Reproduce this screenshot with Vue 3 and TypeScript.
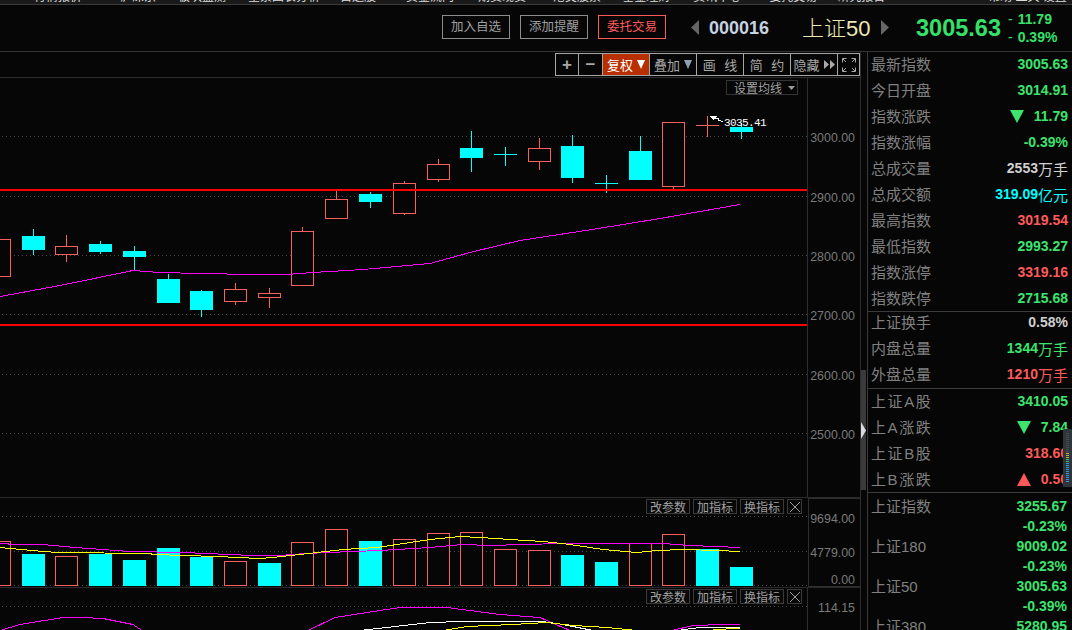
<script setup lang="ts">
interface Candle {
  x: number;
  hi: number;
  lo: number;
  top: number;
  bot: number;
  up: boolean;
  cross?: boolean;
  vol: number;
  volUp: boolean;
}

interface Row {
  label: string;
  value?: string;
  unit?: string;
  tone?: string;
  arrow?: 'up' | 'down';
}

// 상단 메뉴: 잘려서 아래쪽만 보임
const menu = [
  { t: '行情报价', gap: 34 },
  { t: '沪深京', gap: 38 },
  { t: '板块监测', gap: 22 },
  { t: '全景图表分析', gap: 22 },
  { t: '自选股', gap: 20 },
  { t: '资金流向', gap: 30 },
  { t: '期货现货', gap: 24 },
  { t: '港美股票', gap: 27 },
  { t: '基金理财', gap: 21 },
  { t: '资讯中心', gap: 23 },
  { t: '委托交易', gap: 28 },
  { t: '研究报告', gap: 20 },
  { t: '帮助 工具 设置', gap: 103 }
];

const tools = [
  { t: '+', cls: 'sym w23' },
  { t: '−', cls: 'sym w24' },
  { t: '复权', cls: 'on wide', tri: true },
  { t: '叠加', cls: 'wide', tri: true },
  { t: '画 线', cls: 'wide' },
  { t: '简 约', cls: 'wide' },
  { t: '隐藏', cls: 'wide', more: true }
];

const candles: Candle[] = [
  { x: -1, hi: 239, lo: 276, top: 239, bot: 276, up: true, vol: 541, volUp: true },
  { x: 33, hi: 229, lo: 255, top: 236, bot: 250, up: false, vol: 554, volUp: false },
  { x: 66, hi: 235, lo: 262, top: 246, bot: 254, up: true, vol: 556, volUp: true },
  { x: 100, hi: 241, lo: 254, top: 244, bot: 252, up: false, vol: 554, volUp: false },
  { x: 134, hi: 246, lo: 270, top: 251, bot: 257, up: false, vol: 560, volUp: false },
  { x: 168, hi: 274, lo: 303, top: 279, bot: 303, up: false, vol: 548, volUp: false },
  { x: 201, hi: 290, lo: 317, top: 291, bot: 310, up: false, vol: 557, volUp: false },
  { x: 235, hi: 283, lo: 305, top: 289, bot: 301, up: true, vol: 561, volUp: true },
  { x: 269, hi: 288, lo: 308, top: 293, bot: 297, up: true, vol: 563, volUp: false },
  { x: 302, hi: 227, lo: 285, top: 231, bot: 285, up: true, vol: 542, volUp: true },
  { x: 336, hi: 191, lo: 218, top: 199, bot: 218, up: true, vol: 529, volUp: true },
  { x: 370, hi: 192, lo: 208, top: 194, bot: 202, up: false, vol: 541, volUp: false },
  { x: 404, hi: 181, lo: 215, top: 183, bot: 213, up: true, vol: 539, volUp: true },
  { x: 438, hi: 159, lo: 182, top: 164, bot: 179, up: true, vol: 533, volUp: true },
  { x: 471, hi: 131, lo: 172, top: 148, bot: 158, up: false, vol: 532, volUp: true },
  { x: 505, hi: 147, lo: 166, top: 154, bot: 154, up: false, cross: true, vol: 549, volUp: true },
  { x: 539, hi: 138, lo: 170, top: 148, bot: 161, up: true, vol: 550, volUp: true },
  { x: 572, hi: 135, lo: 183, top: 146, bot: 178, up: false, vol: 555, volUp: false },
  { x: 606, hi: 175, lo: 193, top: 183, bot: 183, up: false, cross: true, vol: 562, volUp: false },
  { x: 640, hi: 136, lo: 180, top: 151, bot: 180, up: false, vol: 543, volUp: true },
  { x: 673, hi: 122, lo: 189, top: 122, bot: 186, up: true, vol: 534, volUp: true },
  { x: 707, hi: 116, lo: 137, top: 125, bot: 125, up: true, cross: true, vol: 549, volUp: false },
  { x: 741, hi: 123, lo: 139, top: 127, bot: 132, up: false, vol: 567, volUp: false }
];

const mainGrid = [136, 196, 255, 314, 374, 433];
const mainAxis = [
  { t: '3000.00', y: 137 },
  { t: '2900.00', y: 197 },
  { t: '2800.00', y: 256 },
  { t: '2700.00', y: 315 },
  { t: '2600.00', y: 375 },
  { t: '2500.00', y: 434 }
];

const toPts = (list: number[][]) => list.map((p) => p.join(',')).join(' ');

const maLine = toPts([
  [0, 296], [60, 285], [133, 270], [160, 272], [200, 273], [253, 274], [286, 274],
  [313, 272], [363, 269], [430, 263], [470, 252], [520, 240], [592, 229], [660, 218], [740, 204]
]);

const volYellow = toPts([
  [0, 547], [43, 551], [58, 552], [150, 553], [153, 554], [217, 556], [260, 558], [273, 557],
  [300, 554], [317, 552], [343, 549], [377, 547], [430, 539], [460, 536], [480, 537], [510, 539],
  [543, 541], [570, 544], [603, 549], [637, 552], [657, 550], [683, 549], [717, 550], [740, 551]
]);
const volPurple = toPts([
  [0, 543], [17, 544], [42, 544], [75, 547], [130, 551], [183, 552], [253, 555], [283, 555],
  [290, 554], [327, 552], [380, 550], [430, 547], [463, 544], [490, 545], [523, 544], [563, 543],
  [663, 543], [690, 545], [740, 547]
]);

const subLines = [
  { c: '#ff00ff', p: toPts([[0, 630], [20, 624], [63, 617], [83, 617], [103, 618], [133, 624], [142, 630]]) },
  { c: '#ff00ff', p: toPts([[308, 630], [335, 617], [367, 612], [400, 607], [447, 607], [500, 614], [540, 617], [570, 630]]) },
  { c: '#ff00ff', p: toPts([[672, 630], [693, 625], [723, 624], [740, 624]]) },
  { c: '#ffffff', p: toPts([[360, 630], [430, 622], [463, 621], [543, 621], [563, 624], [593, 630]]) },
  { c: '#ffffff', p: toPts([[677, 630], [700, 627], [740, 627]]) },
  { c: '#ffff00', p: toPts([[443, 630], [467, 626], [513, 624], [547, 622], [573, 625], [607, 627], [637, 630]]) },
  { c: '#ffff00', p: toPts([[713, 629], [740, 628]]) }
];

const paneTools = ['改参数', '加指标', '换指标'];

const groupA: Row[] = [
  { label: '最新指数', value: '3005.63', tone: 'down' },
  { label: '今日开盘', value: '3014.91', tone: 'down' },
  { label: '指数涨跌', value: '11.79', tone: 'down', arrow: 'down' },
  { label: '指数涨幅', value: '-0.39%', tone: 'down' },
  { label: '总成交量', value: '2553', unit: '万手', tone: 'plain' },
  { label: '总成交额', value: '319.09', unit: '亿元', tone: 'cyan' },
  { label: '最高指数', value: '3019.54', tone: 'rise' },
  { label: '最低指数', value: '2993.27', tone: 'down' },
  { label: '指数涨停', value: '3319.16', tone: 'rise' },
  { label: '指数跌停', value: '2715.68', tone: 'down' }
];
const groupB: Row[] = [
  { label: '上证换手', value: '0.58%', tone: 'plain' },
  { label: '内盘总量', value: '1344', unit: '万手', tone: 'down' },
  { label: '外盘总量', value: '1210', unit: '万手', tone: 'rise' }
];
const groupC: Row[] = [
  { label: '上证A股', value: '3410.05', tone: 'down' },
  { label: '上A涨跌', value: '7.84', tone: 'down', arrow: 'down' },
  { label: '上证B股', value: '318.60', tone: 'rise' },
  { label: '上B涨跌', value: '0.50', tone: 'rise', arrow: 'up' }
];
const groupD: Row[] = [
  { label: '上证指数', value: '3255.67', tone: 'down' },
  { label: '', value: '-0.23%', tone: 'down' },
  { label: '上证180', value: '9009.02', tone: 'down' },
  { label: '', value: '-0.23%', tone: 'down' },
  { label: '上证50', value: '3005.63', tone: 'down' },
  { label: '', value: '-0.39%', tone: 'down' },
  { label: '上证380', value: '5280.95', tone: 'down' }
];
const groups = [groupA, groupB, groupC];

// 라틴 글자가 들어간 라벨은 폭을 맞추기 위해 자간을 준다
const isLatin = (s: string) => /[AB]/.test(s);

// 오른쪽 작은 레벨 미터
const meter = Array.from({ length: 25 }, (_, i) => (i < 10 ? 'off' : i < 13 ? 'yel' : i < 15 ? 'grn' : 'blu'));
</script>

<template>
  <div class="app">
    <div class="menu">
      <span v-for="m in menu" :key="m.t" :style="{ marginLeft: m.gap + 'px' }">{{ m.t }}</span>
    </div>

    <header class="head">
      <button class="act">加入自选</button>
      <button class="act">添加提醒</button>
      <button class="act trade">委托交易</button>
      <svg class="nav first" width="8" height="15" viewBox="0 0 8 15"><path d="M8 0V15L0 7.5Z" fill="#666" /></svg>
      <span class="code">000016</span>
      <span class="name">上证50</span>
      <svg class="nav" width="8" height="15" viewBox="0 0 8 15"><path d="M0 0V15L8 7.5Z" fill="#666" /></svg>
      <span class="price">3005.63</span>
      <div class="change">
        <span><i>-</i>11.79</span>
        <span><i>-</i>0.39%</span>
      </div>
    </header>

    <div class="body">
      <section class="chart">
        <div class="toolbar">
          <div class="tools">
            <div v-for="b in tools" :key="b.t" class="tool" :class="b.cls">
              {{ b.t }}
              <svg v-if="b.tri" width="8" height="9" viewBox="0 0 8 9"><path d="M0 0H8L4 9Z" :fill="b.cls.includes('on') ? '#fff' : '#8fa0b4'" /></svg>
              <svg v-if="b.more" width="11" height="9" viewBox="0 0 11 9"><path d="M0 0L5 4.5L0 9ZM6 0L11 4.5L6 9Z" fill="#aaa" /></svg>
            </div>
            <div class="tool full">
              <svg width="14" height="14" viewBox="0 0 14 14" fill="none" stroke="#aaa">
                <path d="M4.5 .5H.5V4.5M9.5 .5H13.5V4.5M4.5 13.5H.5V9.5M9.5 13.5H13.5V9.5M1 1L4 4M13 1L10 4M1 13L4 10M13 13L10 10" />
              </svg>
            </div>
          </div>
        </div>

        <div class="pane main">
          <svg class="plot" viewBox="0 78 860 419" width="860" height="419" shape-rendering="crispEdges">
            <line x1="807.5" y1="78" x2="807.5" y2="497" stroke="#2e2e2e" />
            <line v-for="g in mainGrid" :key="g" x1="2" x2="807" :y1="g + 0.5" :y2="g + 0.5" class="dots" />
            <g v-for="c in candles" :key="c.x">
              <line :x1="c.x + 0.5" :x2="c.x + 0.5" :y1="c.hi" :y2="c.lo" :stroke="c.up ? '#fa5f5f' : '#00ffff'" />
              <line v-if="c.cross" :x1="c.x - 11" :x2="c.x + 12" :y1="c.top + 0.5" :y2="c.top + 0.5" :stroke="c.up ? '#fa5f5f' : '#00ffff'" />
              <rect v-else-if="c.up" :x="c.x - 10.5" :y="c.top + 0.5" width="22" :height="c.bot - c.top" fill="#060606" stroke="#fa5f5f" />
              <rect v-else :x="c.x - 11" :y="c.top" width="23" :height="c.bot - c.top" fill="#00ffff" />
            </g>
            <polyline :points="maLine" fill="none" stroke="#ff00ff" transform="translate(0 .5)" />
            <rect x="0" y="189" width="807" height="2" fill="#ff0000" />
            <rect x="0" y="324" width="807" height="2" fill="#ff0000" />
            <path d="M709 116H717L713 120Z" fill="#fff" />
            <path d="M713 117.5L718 118.5L719 120.5L723 121.5" fill="none" stroke="#fff" />
            <text x="724" y="126" class="mark">3035.41</text>
            <text v-for="a in mainAxis" :key="a.t" x="855" :y="a.y + 5" text-anchor="end" class="axis">{{ a.t }}</text>
          </svg>
          <div class="ma-set">设置均线<svg width="7" height="4" viewBox="0 0 7 4"><path d="M0 0H7L3.5 4Z" fill="#999" /></svg></div>
        </div>

        <div class="pane vol">
          <svg class="plot" viewBox="0 498 860 89" width="860" height="89" shape-rendering="crispEdges">
            <rect x="808.5" y="498.5" width="52" height="88" fill="none" stroke="#2e2e2e" />
            <line v-for="g in [516, 551, 585]" :key="g" x1="2" x2="807" :y1="g + 0.5" :y2="g + 0.5" class="dots" />
            <g v-for="c in candles" :key="c.x">
              <rect v-if="c.volUp" :x="c.x - 10.5" :y="c.vol + 0.5" width="22" :height="585 - c.vol" fill="#060606" stroke="#fa5f5f" />
              <rect v-else :x="c.x - 11" :y="c.vol" width="23" :height="586 - c.vol" fill="#00ffff" />
            </g>
            <g transform="translate(0 .5)">
              <polyline :points="volPurple" fill="none" stroke="#ff00ff" />
              <polyline :points="volYellow" fill="none" stroke="#ffff00" />
            </g>
            <text x="855" y="523" text-anchor="end" class="axis">9694.00</text>
            <text x="855" y="557" text-anchor="end" class="axis">4779.00</text>
            <text x="855" y="584" text-anchor="end" class="axis">0.00</text>
          </svg>
          <div class="pane-tools">
            <span v-for="p in paneTools" :key="p">{{ p }}</span>
            <span class="close"><svg width="10" height="10" viewBox="0 0 10 10"><path d="M0 0L10 10M10 0L0 10" stroke="#999" fill="none" /></svg></span>
          </div>
        </div>

        <div class="pane sub">
          <svg class="plot" viewBox="0 588 860 42" width="860" height="42" shape-rendering="crispEdges">
            <line x1="2" x2="807" y1="606.5" y2="606.5" class="dots" />
            <line x1="807.5" y1="588" x2="807.5" y2="630" stroke="#2e2e2e" />
            <g transform="translate(0 .5)">
              <polyline v-for="(l, i) in subLines" :key="i" :points="l.p" fill="none" :stroke="l.c" />
            </g>
            <text x="855" y="612" text-anchor="end" class="axis">114.15</text>
          </svg>
          <div class="pane-tools">
            <span v-for="p in paneTools" :key="p">{{ p }}</span>
            <span class="close"><svg width="10" height="10" viewBox="0 0 10 10"><path d="M0 0L10 10M10 0L0 10" stroke="#999" fill="none" /></svg></span>
          </div>
        </div>
      </section>

      <div class="rail">
        <div class="handle">
          <svg width="5" height="17" viewBox="0 0 5 17"><path d="M0 0L5 8.5L0 17Z" fill="#ddd" /></svg>
        </div>
      </div>

      <aside class="side">
        <div v-for="(g, gi) in groups" :key="gi" class="group">
          <div v-for="r in g" :key="r.label" class="row">
            <span class="lab" :class="{ latin: isLatin(r.label) }">{{ r.label }}</span>
            <span class="val" :class="r.tone">
              <svg v-if="r.arrow" class="tri" width="14" height="13" viewBox="0 0 14 13">
                <path :d="r.arrow === 'down' ? 'M0 0H14L7 13Z' : 'M0 13H14L7 0Z'" fill="currentColor" />
              </svg>
              {{ r.value }}<em v-if="r.unit">{{ r.unit }}</em>
            </span>
          </div>
        </div>
        <div class="group last">
          <div v-for="(r, i) in groupD" :key="i" class="row thin">
            <span class="lab">{{ r.label }}</span>
            <span class="val" :class="r.tone">{{ r.value }}</span>
          </div>
        </div>
        <div class="meter">
          <b v-for="(m, i) in meter" :key="i" :class="m"></b>
        </div>
      </aside>
    </div>
  </div>
</template>

<style>
html,
body {
  margin: 0;
  background: #060606;
}
</style>

<style scoped>
.app {
  width: 1072px;
  height: 630px;
  overflow: hidden;
  background: #060606;
  color: #999;
  font-family: "Liberation Sans", "Noto Sans CJK SC", sans-serif;
  display: flex;
  flex-direction: column;
}

/* 상단 메뉴 */
.menu {
  height: 4px;
  flex: none;
  display: flex;
  overflow: hidden;
  background: #1a1a1a;
  border-bottom: 1px solid #3a3a3a;
  color: #ddd;
  font-size: 12px;
  line-height: 12px;
  white-space: nowrap;
}
.menu span {
  margin-top: -9px;
}

.head {
  height: 46px;
  flex: none;
  display: flex;
  align-items: center;
  padding-left: 442px;
  border-bottom: 1px solid #333;
  background: #060606;
}
.act {
  width: 68px;
  height: 24px;
  margin: -2px 10px 0 0;
  padding: 0;
  background: transparent;
  border: 1px solid #8c8c8c;
  color: #a0a0a0;
  font: 12.5px/22px "Liberation Sans", "Noto Sans CJK SC", sans-serif;
}
.act.trade {
  border-color: #ff5a5a;
  color: #ff5a5a;
  margin-right: 0;
}
.nav {
  flex: none;
  margin-top: -2px;
}
.nav.first {
  margin-left: 25px;
}
.code {
  margin: 0 0 0 10px;
  width: 62px;
  font-size: 18px;
  font-weight: 700;
  color: #c6d2e2;
}
.name {
  margin: -4px 0 0 31px;
  width: 79px;
  font-size: 22px;
  font-weight: 300;
  color: #ece8b4;
}
.price {
  margin: 0 0 0 27px;
  width: 92px;
  font-size: 23.5px;
  font-weight: 700;
  color: #36e06a;
}
.change {
  display: flex;
  flex-direction: column;
  color: #36e06a;
  font-size: 14px;
  font-weight: 700;
  line-height: 18px;
}
.change i {
  font-style: normal;
  margin-right: 5px;
  font-weight: 400;
}

.body {
  flex: 1;
  display: flex;
  min-height: 0;
}

.chart {
  width: 860px;
  flex: none;
  display: flex;
  flex-direction: column;
}

.toolbar {
  height: 24px;
  flex: none;
  display: flex;
  justify-content: flex-end;
  align-items: flex-start;
  padding-top: 1px;
  border-bottom: 1px solid #2e2e2e;
}
.tools {
  display: flex;
  height: 21px;
  border: 1px solid #a6a6a6;
}
.tool {
  display: flex;
  align-items: center;
  justify-content: center;
  gap: 4px;
  box-sizing: border-box;
  border-left: 1px solid #a6a6a6;
  font-size: 13px;
  word-spacing: 5px;
  color: #a8a8a8;
  white-space: nowrap;
}
.tool:first-child {
  border-left: 0;
}
.tool.sym {
  font-weight: 700;
  font-size: 17px;
}
.tool.w23 {
  width: 22px;
}
.tool.w24 {
  width: 24px;
}
.tool.wide {
  width: 47px;
}
.tool.on {
  background: #b83000;
  color: #fff;
}
.tool.full {
  width: 22px;
}

.pane {
  position: relative;
  flex: none;
}
.plot {
  display: block;
}
.pane.main {
  height: 419px;
  border-bottom: 1px solid #2a2a2a;
}
.pane.vol {
  height: 89px;
  border-bottom: 1px solid #2a2a2a;
}
.pane.sub {
  height: 42px;
}
.dots {
  stroke: #4a4a4a;
  stroke-dasharray: 1 3;
}
.axis {
  font-size: 12.4px;
  fill: #7a7a7a;
}
.mark {
  font-family: "Liberation Mono", monospace;
  font-size: 11px;
  letter-spacing: -0.6px;
  fill: #fff;
}

/* 차트 위에 떠 있는 버튼들 */
.ma-set {
  position: absolute;
  top: 2px;
  left: 726px;
  width: 72px;
  height: 15px;
  box-sizing: border-box;
  padding-left: 7px;
  border: 1px solid #333;
  display: flex;
  align-items: center;
  gap: 6px;
  font-size: 12px;
  color: #a0a0a0;
  background: #060606;
}
.pane-tools {
  position: absolute;
  top: 1px;
  left: 646px;
  display: flex;
  gap: 3px;
}
.pane-tools span {
  width: 44px;
  height: 15px;
  box-sizing: border-box;
  border: 1px solid #3a3a3a;
  display: flex;
  align-items: center;
  justify-content: center;
  font-size: 12px;
  color: #a0a0a0;
  background: #080808;
  white-space: nowrap;
}
.pane-tools .close {
  width: 15px;
}

/* 스크롤 레일 */
.rail {
  width: 7px;
  flex: none;
  box-sizing: border-box;
  border-left: 1px solid #2e2e2e;
}
.handle {
  width: 5px;
  height: 120px;
  margin: 318px 0 0 0;
  background: #3a3a3a;
  display: flex;
  align-items: center;
}

/* 오른쪽 패널 */
.side {
  position: relative;
  flex: 1;
  min-width: 0;
  border-left: 1px solid #3a3a3a;
  overflow: hidden;
}
.group {
  border-bottom: 1px solid #3a3a3a;
}
.group:first-child {
  margin-top: -1px;
}
.group:nth-child(2) {
  padding-bottom: 1px;
}
.group:nth-child(2) .row:first-child {
  height: 23px;
  padding-bottom: 3px;
  box-sizing: border-box;
}
.group:nth-child(3) {
  margin-top: -1px;
}
.group.last {
  border-bottom: 0;
  padding-top: 3px;
}
.row {
  height: 26px;
  display: flex;
  align-items: center;
  justify-content: space-between;
  padding: 0 4px 0 3px;
}
.row.thin {
  height: 20px;
  padding-right: 5px;
}
.lab {
  margin-top: -2px;
  font-size: 15px;
  color: #808080;
  white-space: nowrap;
}
.lab.latin {
  letter-spacing: 1.6px;
}
.val {
  display: flex;
  align-items: center;
  font-size: 14px;
  font-weight: 700;
  white-space: pre;
}
.val em {
  font-style: normal;
  font-weight: 400;
  font-size: 15px;
}
.tri {
  margin-right: 6px;
}
.down {
  color: #3ce46e;
}
.rise {
  color: #ff5a5a;
}
.plain {
  color: #d0d0d0;
}
.cyan {
  color: #00ffff;
}

.meter {
  position: absolute;
  right: 0;
  top: 377px;
  width: 9px;
  height: 58px;
  box-sizing: border-box;
  padding: 4px 3px 3px 3px;
  background: #2e363c;
  border-radius: 1px;
  display: flex;
  flex-direction: column;
  gap: 1px;
}
.meter b {
  display: block;
  height: 1px;
}
.meter .off {
  background: #454d52;
}
.meter .yel {
  background: #b8b83c;
}
.meter .grn {
  background: #3fb87a;
}
.meter .blu {
  background: #2a9cdc;
}
</style>
